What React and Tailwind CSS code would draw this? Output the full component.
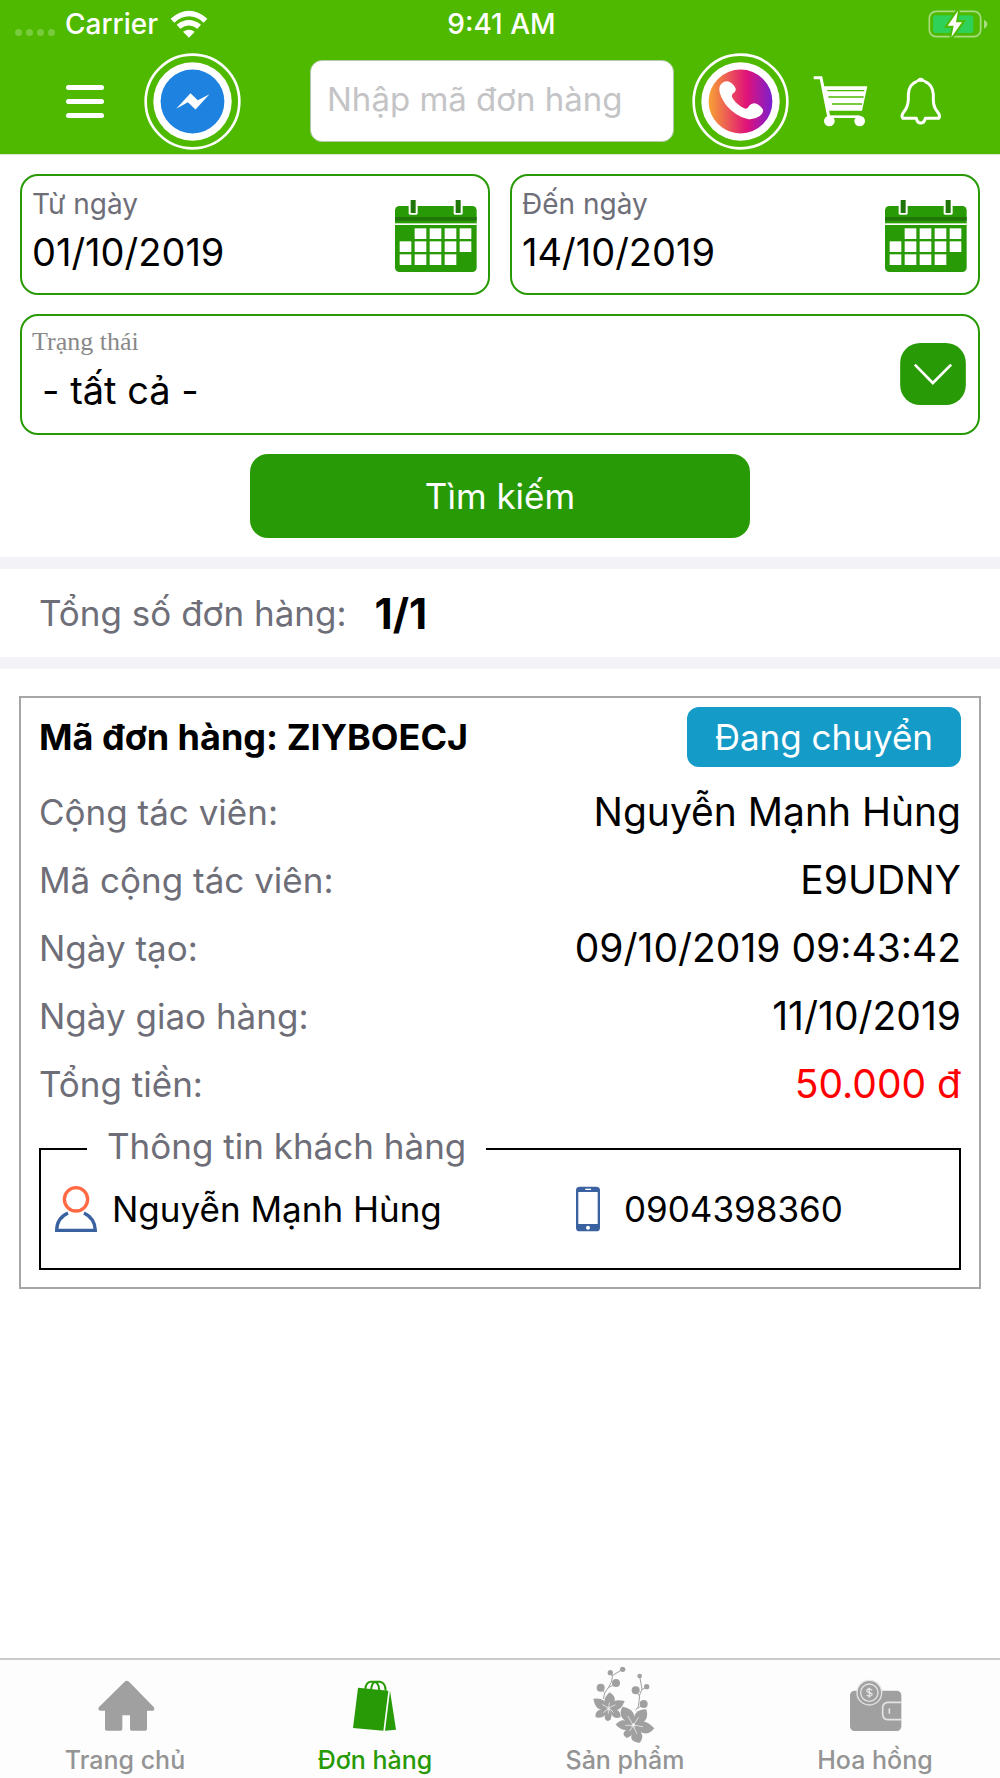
import { useState } from 'react'

const ORDER_ROWS = [
  { label: 'Cộng tác viên:', value: 'Nguyễn Mạnh Hùng' },
  { label: 'Mã cộng tác viên:', value: 'E9UDNY' },
  { label: 'Ngày tạo:', value: '09/10/2019 09:43:42' },
  { label: 'Ngày giao hàng:', value: '11/10/2019' },
  { label: 'Tổng tiền:', value: '50.000 đ', highlight: true },
]

const TABS = [
  { id: 'home', label: 'Trang chủ', Icon: HomeIcon },
  { id: 'orders', label: 'Đơn hàng', Icon: BagIcon },
  { id: 'products', label: 'Sản phẩm', Icon: OrchidIcon },
  { id: 'commission', label: 'Hoa hồng', Icon: WalletIcon },
]

function WifiIcon() {
  return (
    <svg viewBox="516 28 114 84" className="h-7 w-[38px]" fill="#fff" aria-hidden="true">
      <path d="M518 54 Q573 7 628 54 L617 66 Q573 28 529 66 Z" />
      <path d="M536 72 Q573 44 609 72 L598 84 Q573 65 547 84 Z" />
      <path d="M555 93 Q573 81 590 93 L573 111 Z" />
    </svg>
  )
}

function BatteryIcon() {
  return (
    <svg viewBox="1286 28 180 84" className="h-7 w-15" aria-hidden="true">
      <rect x="1290" y="32" width="154" height="76" rx="20" fill="none" stroke="#a7dc80" strokeWidth="5" />
      <path d="M1454 57 Q1464 62 1464 70 Q1464 79 1454 84 Z" fill="#a7dc80" />
      <rect x="1301" y="44" width="121" height="53" rx="10" fill="#30d158" />
      <path
        d="M1376 30 L1345 75 H1363 L1356 110 L1388 65 H1370 Z"
        fill="#fff"
        stroke="#4fb900"
        strokeWidth="12"
        paintOrder="stroke"
      />
    </svg>
  )
}

function MessengerIcon() {
  return (
    <svg viewBox="430 161 292 292" className="size-[97px]" aria-hidden="true">
      <circle cx="576" cy="307" r="141" fill="none" stroke="#fff" strokeWidth="8" />
      <circle cx="576" cy="307" r="118" fill="#fff" />
      <circle cx="576" cy="307" r="96" fill="#1e82e0" />
      <path d="M527 329 L570 282 L592 303 L627 285 L585 331 L562 309 Z" fill="#fff" />
    </svg>
  )
}

function CallIcon() {
  return (
    <svg viewBox="578 161 292 292" className="size-[97px]" aria-hidden="true">
      <defs>
        <linearGradient id="call-fill" x1="0" x2="1" y1="0" y2="0">
          <stop offset="0" stopColor="#f7a234" />
          <stop offset="0.6" stopColor="#e01278" />
          <stop offset="1" stopColor="#7a1fd0" />
        </linearGradient>
      </defs>
      <circle cx="724" cy="307" r="141" fill="none" stroke="#fff" strokeWidth="8" />
      <circle cx="724" cy="307" r="118" fill="#fff" />
      <circle cx="724" cy="307" r="96" fill="url(#call-fill)" />
      <path
        d="M667 253 Q679 242 693 249 Q706 257 710 270 Q710 278 700 284 Q696 290 700 297 Q714 318 738 329 Q746 330 750 320 Q758 310 770 313 Q784 318 792 332 Q793 342 782 351 Q766 363 745 360 Q708 350 681 318 Q661 290 660 270 Q660 259 667 253 Z"
        fill="#fff"
      />
    </svg>
  )
}

function CartIcon() {
  return (
    <svg viewBox="945 228 165 156" className="h-[52px] w-[55px]" aria-hidden="true">
      <path d="M947 236 H969 L992 352" fill="none" stroke="#fff" strokeWidth="9" />
      <path d="M975 262 H1108 L1092 335 H991 Z" fill="#fff" />
      <path d="M988 275 H1099 M991 294 H1097 M1002 315 H1092" stroke="#4fb900" strokeWidth="4" />
      <path d="M992 353 H1085" stroke="#fff" strokeWidth="8" />
      <circle cx="994" cy="366" r="16" fill="#fff" />
      <circle cx="1085" cy="366" r="16" fill="#fff" />
    </svg>
  )
}

function BellIcon() {
  return (
    <svg viewBox="1204 236 126 144" className="h-12 w-[42px]" aria-hidden="true">
      <path
        d="M1255 249 Q1230 258 1229 288 V304 Q1228 326 1216 340 Q1206 353 1213 360 H1253 Q1256 374 1266 374 Q1277 374 1280 360 H1320 Q1326 353 1317 341 Q1304 326 1304 304 V288 Q1302 258 1278 249"
        fill="none"
        stroke="#fff"
        strokeWidth="9"
        strokeLinejoin="round"
      />
      <path d="M1250 254 Q1256 238 1266 238 Q1276 238 1283 254 Q1266 246 1250 254 Z" fill="#fff" />
    </svg>
  )
}

function CalendarIcon() {
  const cells = [
    [1, 2, 3, 4],
    [0, 1, 2, 3, 4],
    [0, 1, 2, 3],
  ]
  return (
    <svg viewBox="1183 114 252 222" className="h-[74px] w-[84px]" aria-hidden="true">
      <rect x="1186" y="135" width="245" height="198" rx="13" fill="#289a06" />
      <rect x="1186" y="168" width="245" height="11" fill="#1f7508" />
      <rect x="1186" y="187" width="245" height="5" fill="#fff" />
      {[1240, 1375].map((x) => (
        <g key={x}>
          <rect x={x - 13} y="112" width="27" height="49" rx="4" fill="#fff" />
          <rect x={x - 7} y="117" width="15" height="39" fill="#1f7508" />
        </g>
      ))}
      {cells.map((row, r) =>
        row.map((c) => (
          <rect key={`${r}-${c}`} x={1200 + c * 45} y={202 + r * 39} width="35" height="32" fill="#fff" />
        ))
      )}
    </svg>
  )
}

function HomeIcon() {
  return (
    <svg viewBox="255 39 240 240" className="size-20" fill="currentColor" aria-hidden="true">
      <path d="M374 95 Q380 90 387 95 L461 171 Q466 180 458 182 H441 V237 Q441 242 436 242 H395 Q390 242 390 237 V196 H367 V237 Q367 242 362 242 H320 Q315 242 315 237 V182 H300 Q292 179 297 171 Z" />
    </svg>
  )
}

function BagIcon() {
  return (
    <svg viewBox="1005 39 240 240" className="size-20" aria-hidden="true">
      <path d="M1074 113 L1165 122 L1150 242 L1059 234 Z" fill="currentColor" />
      <path d="M1170 122 L1188 239 L1155 242 Z" fill="currentColor" />
      <path
        d="M1096 117 Q1098 96 1112 95 H1140 Q1156 97 1157 122 M1113 119 Q1116 98 1125 96 Q1136 98 1138 121"
        fill="none"
        stroke="currentColor"
        strokeWidth="6"
      />
    </svg>
  )
}

function OrchidIcon() {
  return (
    <svg viewBox="45 24 240 240" className="size-20" fill="currentColor" aria-hidden="true">
      <g fill="none" stroke="currentColor" strokeWidth="3">
        <path d="M158 43 L128 61 Q126 84 115 98 Q101 112 100 132 M121 53 L127 64 M115 98 L130 90 M92 98 L103 112" />
        <path d="M209 64 L216 102 Q206 120 207 140 Q208 156 197 166 M230 95 L216 104 M197 107 L208 122 M221 148 L203 160" />
      </g>
      <circle cx="158" cy="43" r="8" />
      <circle cx="121" cy="53" r="8" />
      <circle cx="138" cy="84" r="12" />
      <circle cx="92" cy="98" r="12" />
      <circle cx="209" cy="63" r="7" />
      <circle cx="230" cy="95" r="8" />
      <circle cx="197" cy="106" r="12" />
      <circle cx="221" cy="147" r="12" />
      <path d="M115 156 Q90 137 119 112 Q150 133 119 156 Z" />
      <path d="M113 160 Q78 176 70 131 Q104 126 114 154 Z" />
      <path d="M119 159 Q122 128 164 138 Q149 178 119 161 Z" />
      <path d="M113 161 Q106 194 77 187 Q72 163 109 160 Z" />
      <path d="M115 162 Q130 174 122 193 Q113 203 105 192 Q101 177 115 162 Z" />
      <path d="M119 161 Q154 160 152 186 Q127 198 119 161 Z" />
      <path d="M186 207 Q138 190 157 155 Q202 163 192 204 Z" />
      <path d="M192 205 Q186 164 229 163 Q241 205 195 208 Z" />
      <path d="M194 210 Q218 184 253 220 Q225 254 193 214 Z" />
      <path d="M187 209 Q170 241 137 209 Q155 184 185 205 Z" />
      <path d="M187 213 Q200 236 171 249 Q144 234 187 213 Z" />
      <path d="M191 214 Q232 238 209 263 Q176 260 186 236 Z" />
      <g fill="none" stroke="#dedede" strokeWidth="3" strokeLinecap="round">
        <path d="M116 158 L118 144 M114 158 L98 149 M118 158 L135 150 M113 162 L101 172 M115 162 V175 M120 162 L130 172" />
        <path d="M188 208 L174 184 M193 206 L205 188 M195 211 L218 215 M186 211 L167 211 M187 216 L179 228 M192 217 L200 235" />
      </g>
    </svg>
  )
}

function WalletIcon() {
  return (
    <svg viewBox="1005 39 240 240" className="size-20" aria-hidden="true">
      <rect x="1050" y="122" width="154" height="121" rx="14" fill="currentColor" />
      <path
        d="M1206 157 H1163 Q1148 159 1148 173 V193 Q1149 208 1163 209 H1206"
        fill="none"
        stroke="#e4e4e4"
        strokeWidth="5"
      />
      <path d="M1168 175 V191" stroke="#e4e4e4" strokeWidth="5" />
      <circle cx="1108" cy="128" r="37" fill="currentColor" stroke="#e4e4e4" strokeWidth="4" />
      <circle cx="1108" cy="128" r="26" fill="none" stroke="#e4e4e4" strokeWidth="4" />
      <path
        d="M1116 121 Q1112 116 1106 117 Q1099 119 1101 124 Q1103 127 1109 128 Q1117 130 1116 135 Q1112 141 1100 136 M1108 113 V143"
        fill="none"
        stroke="#e4e4e4"
        strokeWidth="4"
      />
    </svg>
  )
}

function PersonIcon() {
  return (
    <svg viewBox="161 317 132 144" className="h-12 w-11 shrink-0" fill="none" aria-hidden="true">
      <circle cx="227" cy="360" r="35" stroke="#ff6a45" strokeWidth="10" />
      <path d="M203 401 Q169 417 169 453 H285 Q284 417 251 401" stroke="#3b62a0" strokeWidth="10" />
    </svg>
  )
}

function PhoneIcon() {
  return (
    <svg viewBox="228 257 72 138" className="h-[46px] w-6 shrink-0" aria-hidden="true">
      <rect x="228" y="259" width="72" height="134" rx="11" fill="#3b62a0" />
      <rect x="235" y="275" width="58" height="96" fill="#fff" />
      <path d="M256 267 H273" stroke="#fff" strokeWidth="4" />
      <circle cx="264" cy="382" r="6" fill="#fff" />
    </svg>
  )
}

function StatusBar() {
  return (
    <div className="grid h-12 grid-cols-3 items-center pl-[15px] pr-3 text-[28px] font-medium text-white">
      <div className="flex items-center">
        <div className="mt-4 flex gap-1">
          {[0, 1, 2, 3].map((i) => (
            <span key={i} className="size-[7px] rounded-sm bg-[#78cb3c]" />
          ))}
        </div>
        <span className="ml-[10px] mr-3">Carrier</span>
        <WifiIcon />
      </div>
      <div className="text-center">9:41 AM</div>
      <div className="flex justify-end">
        <BatteryIcon />
      </div>
    </div>
  )
}

function Header() {
  const [query, setQuery] = useState('')

  return (
    <header className="border-b border-[#d8e8cc] bg-[#4fb900]">
      <StatusBar />
      <div className="flex h-[106px] items-center pl-[66px] pr-[58px]">
        <button type="button" aria-label="Menu" className="flex flex-col gap-[9px]">
          <span className="h-[5px] w-[38px] rounded-full bg-white" />
          <span className="h-[5px] w-[38px] rounded-full bg-white" />
          <span className="h-[5px] w-[38px] rounded-full bg-white" />
        </button>
        <button type="button" aria-label="Messenger" className="ml-10">
          <MessengerIcon />
        </button>
        <input
          type="search"
          value={query}
          onChange={(e) => setQuery(e.target.value)}
          placeholder="Nhập mã đơn hàng"
          aria-label="Nhập mã đơn hàng"
          className="ml-[69px] mr-[18px] h-[82px] min-w-0 flex-1 rounded-xl border border-[#b5c9a8] bg-white px-4 pb-1 text-[33px] text-black placeholder:text-[#c4c4c6]"
        />
        <button type="button" aria-label="Gọi điện">
          <CallIcon />
        </button>
        <button type="button" aria-label="Giỏ hàng" className="ml-6">
          <CartIcon />
        </button>
        <button type="button" aria-label="Thông báo" className="ml-8">
          <BellIcon />
        </button>
      </div>
    </header>
  )
}

function DateField({ id, label, defaultValue }) {
  const [value, setValue] = useState(defaultValue)

  return (
    <div className="flex flex-1 items-center rounded-[18px] border-2 border-[#289a06] pb-[9px] pl-[10px] pr-[10px] pt-3">
      <div className="min-w-0 flex-1">
        <label htmlFor={id} className="block text-[28px] leading-8 text-[#6e6e78]">
          {label}
        </label>
        <input
          id={id}
          value={value}
          onChange={(e) => setValue(e.target.value)}
          className="block h-16 w-full bg-transparent text-[38px] text-black"
        />
      </div>
      <button type="button" aria-label={`Chọn ${label}`}>
        <CalendarIcon />
      </button>
    </div>
  )
}

function Filters() {
  return (
    <form onSubmit={(e) => e.preventDefault()} className="flex flex-col gap-[19px] px-5 py-[19px]">
      <div className="flex gap-5">
        <DateField id="from" label="Từ ngày" defaultValue="01/10/2019" />
        <DateField id="to" label="Đến ngày" defaultValue="14/10/2019" />
      </div>
      <div className="flex items-center rounded-[18px] border-2 border-[#289a06] pb-[11px] pl-[10px] pr-3 pt-[10px]">
        <div className="min-w-0 flex-1">
          <label
            htmlFor="status"
            className="block font-['Liberation_Serif',serif] text-[26px] leading-8 text-[#888]"
          >
            Trạng thái
          </label>
          <select id="status" className="block h-16 w-full appearance-none bg-transparent pl-[10px] text-[38px] text-black">
            <option>- tất cả -</option>
          </select>
        </div>
        <svg viewBox="1199 550 197 186" className="h-[62px] w-[66px]" aria-hidden="true">
          <rect x="1199" y="550" width="197" height="186" rx="60" fill="#289a06" />
          <path d="M1243 615 L1297 670 L1352 615" fill="none" stroke="#fff" strokeWidth="8" />
        </svg>
      </div>
      <button type="submit" className="h-21 w-[52%] self-center rounded-[18px] bg-[#289a06] text-[35px] text-white">
        Tìm kiếm
      </button>
    </form>
  )
}

function OrderCard() {
  return (
    <article className="mx-[19px] mt-[27px] border-2 border-[#a6a6a6] px-[18px] pb-[17px] pt-[9px]">
      <div className="flex items-center justify-between">
        <h2 className="text-[36px] font-bold leading-[60px]">Mã đơn hàng: ZIYBOECJ</h2>
        <span className="rounded-xl bg-[#159bc7] px-7 text-[35px] leading-[60px] text-white">Đang chuyển</span>
      </div>
      <dl className="mt-[11px] pb-1">
        {ORDER_ROWS.map((row) => (
          <div key={row.label} className="flex h-[68px] items-center justify-between">
            <dt className="text-[35px] text-[#6e6e78]">{row.label}</dt>
            <dd className={row.highlight ? 'text-[39px] text-[#f00]' : 'text-[39px]'}>{row.value}</dd>
          </div>
        ))}
      </dl>
      <fieldset className="border-2 border-black pb-8 pl-[13px] pt-[6px]">
        <legend className="ml-[33px] px-5 pb-[6px] text-[35px] leading-[48px] text-[#6e6e78]">Thông tin khách hàng</legend>
        <div className="grid grid-cols-[522fr_383fr] text-[35px] leading-[54px]">
          <div className="flex items-center gap-[14px]">
            <PersonIcon />
            <span>Nguyễn Mạnh Hùng</span>
          </div>
          <div className="flex items-center gap-6">
            <PhoneIcon />
            <span>0904398360</span>
          </div>
        </div>
      </fieldset>
    </article>
  )
}

function TabBar() {
  const [active, setActive] = useState('orders')

  return (
    <nav className="mt-auto grid grid-cols-4 border-t-2 border-[#cacaca] bg-[#fdfdfd] pt-[3px]">
      {TABS.map(({ id, label, Icon }) => (
        <button
          key={id}
          type="button"
          onClick={() => setActive(id)}
          className={`flex flex-col items-center ${active === id ? 'text-[#289a06]' : 'text-[#a0a0a0]'}`}
        >
          <Icon />
          <span className={`text-[25px] font-medium leading-[35px] ${active === id ? '' : 'text-[#949494]'}`}>
            {label}
          </span>
        </button>
      ))}
    </nav>
  )
}

export default function App() {
  return (
    <div className="flex min-h-screen flex-col bg-white font-[Inter,'Liberation_Sans',sans-serif] text-black">
      <Header />
      <main>
        <Filters />
        <p className="flex h-28 items-center border-y-12 border-[#f2f2f7] px-[39px] text-[35px] text-[#6e6e78]">
          Tổng số đơn hàng:
          <strong className="ml-7 text-[42px] text-black">1/1</strong>
        </p>
        <OrderCard />
      </main>
      <TabBar />
    </div>
  )
}
